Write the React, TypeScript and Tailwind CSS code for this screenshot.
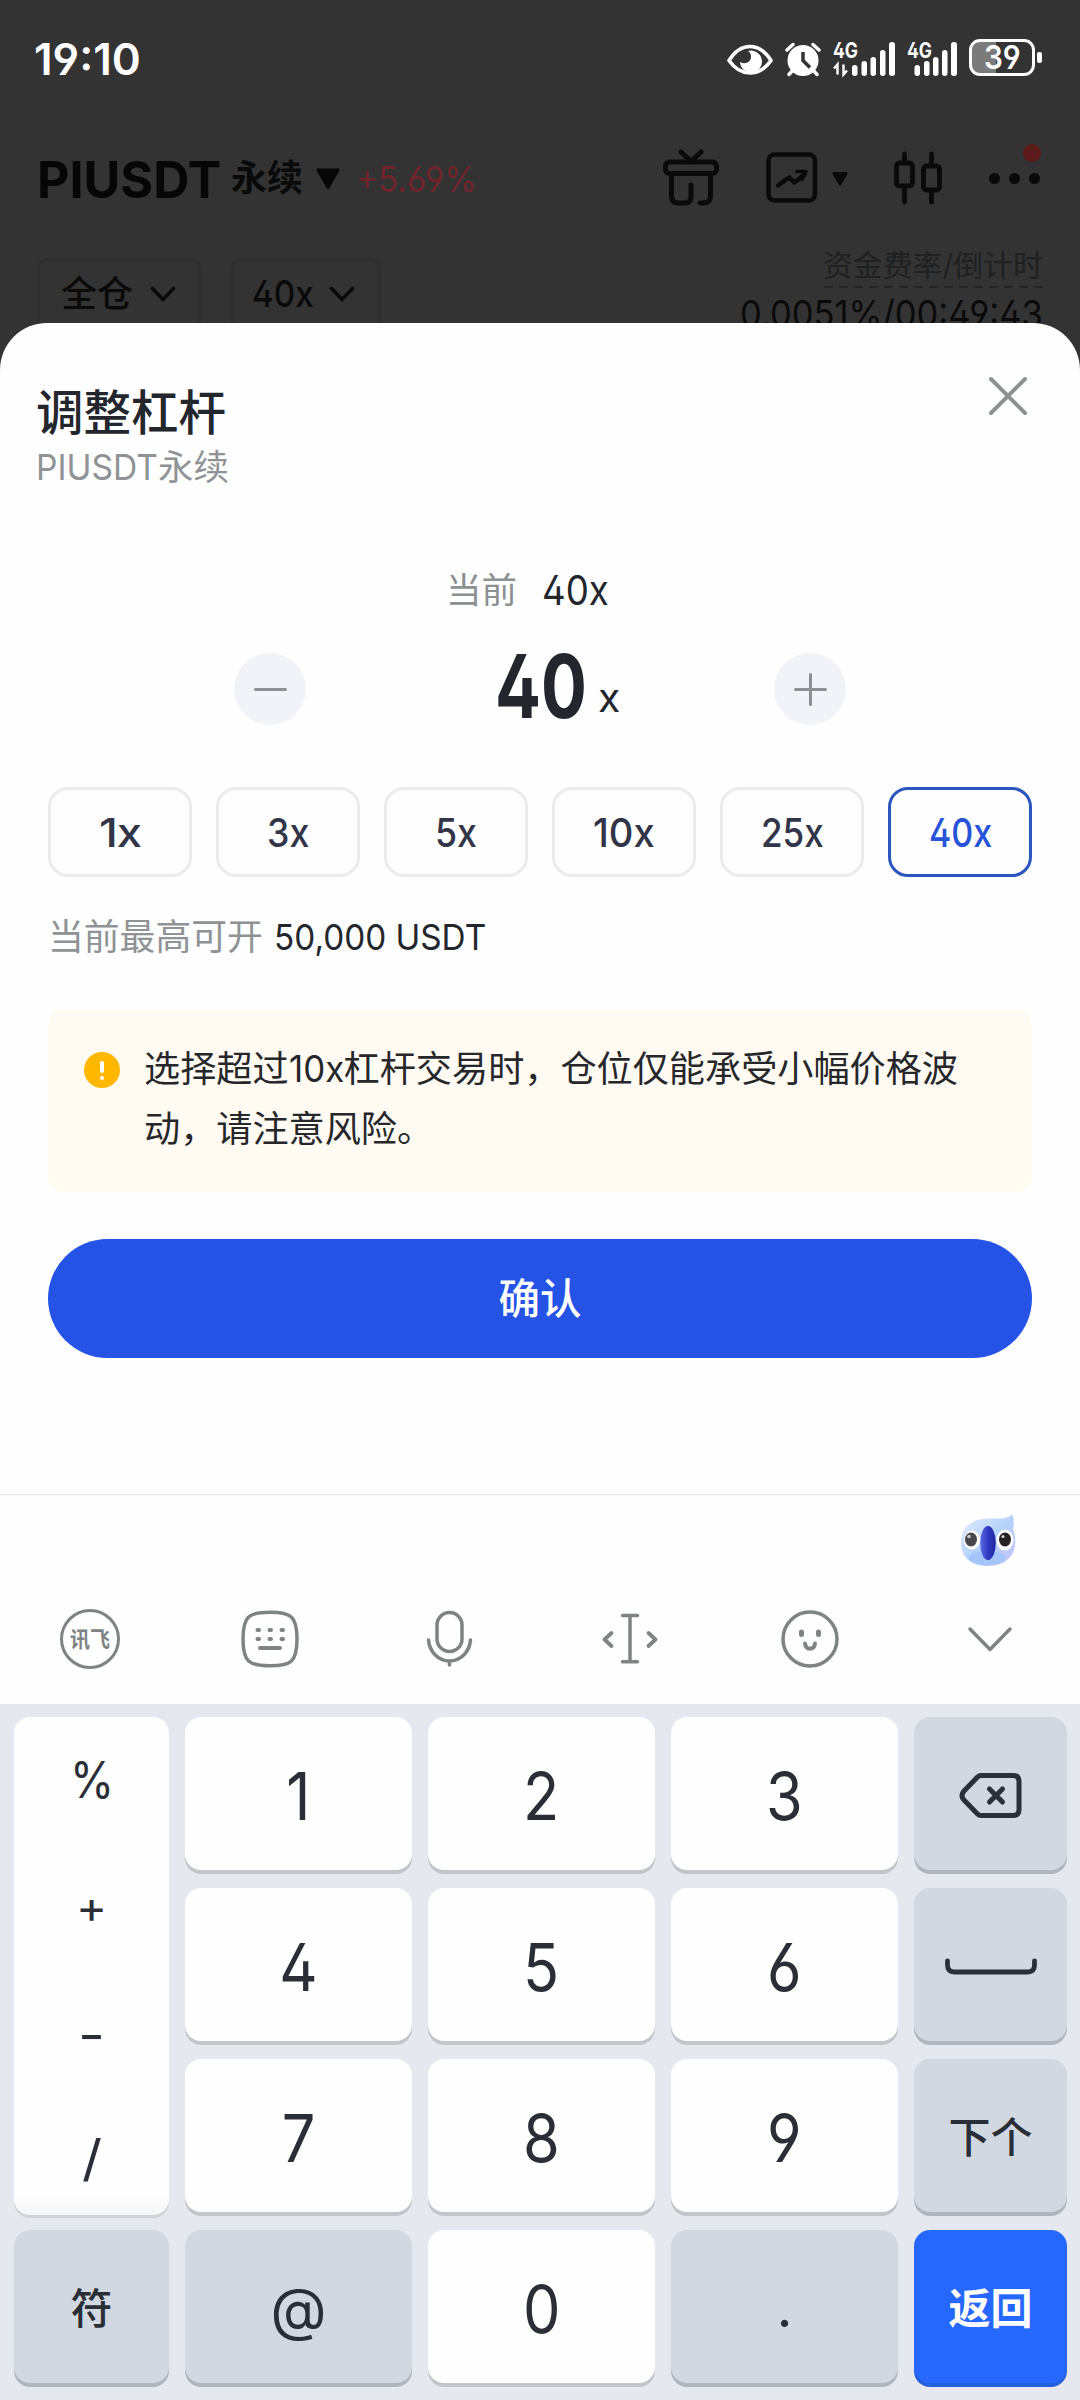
import { useLayoutEffect, useRef, useState } from "react";
import type { ReactNode } from "react";

/** Single line of text condensed or widened to an exact width. */
function Fit({ w, className = "", children }: { w: number; className?: string; children: ReactNode }) {
  const ref = useRef<HTMLSpanElement>(null);
  const [scale, setScale] = useState(1);
  useLayoutEffect(() => {
    if (ref.current) setScale(w / ref.current.offsetWidth);
  }, [w]);
  return (
    <span className={`inline-block whitespace-nowrap ${className}`} style={{ width: w }}>
      <span ref={ref} className="inline-block origin-left" style={{ transform: `scaleX(${scale})` }}>
        {children}
      </span>
    </span>
  );
}

function StatusBar() {
  return (
    <div className="flex h-[118px] items-center justify-between pr-[38px] pl-[34px] text-white">
      <Fit w={107} className="text-[44px] leading-[60px] font-semibold">19:10</Fit>
      <div className="flex items-center gap-3">
        <svg className="h-[36px] w-[46px]" viewBox="727 40 46 36" fill="none">
          <path d="M729 59.500C735 50 742 45.500 750 45.500S765 50 771 59.500C765 68 758 72 750 72S735 68 729 59.500Z" stroke="#fff" strokeWidth="3.600" strokeLinejoin="round" />
          <path d="M748 50a11 11 0 1 1-8 11c5 3 11 0 11-5 0-3-1-5-3-6Z" fill="#fff" />
        </svg>
        <svg className="h-[36px] w-[36px]" viewBox="785 40 36 36" fill="none">
          <circle cx="803" cy="59.500" r="15.500" fill="#fff" />
          <path d="M787 49l6-5.500M819 49l-6-5.500M793 69l-4 4.500M813 69l4 4.500" stroke="#fff" strokeWidth="3.500" strokeLinecap="round" />
          <path d="M803 51v8.500l7 7" stroke="#333" strokeWidth="3.500" />
        </svg>
        <svg className="h-[46px] w-[62px] overflow-visible" viewBox="833 35 62 46" fill="#fff">
          <text x="833" y="57" fontSize="21" fontWeight="700" textLength="25" lengthAdjust="spacingAndGlyphs">4G</text>
          <path d="M834 67.500l3.500-4v10M847 69.500l-3.500 4v-10" fill="none" stroke="#fff" strokeWidth="2.400" />
          <rect x="852" y="64" width="5.500" height="11" rx="2.700" />
          <rect x="861.500" y="60" width="5.500" height="15" rx="2.700" />
          <rect x="870.500" y="56" width="5.500" height="19" rx="2.700" />
          <rect x="880" y="49" width="5.500" height="26" rx="2.700" />
          <rect x="889" y="41" width="6" height="34" rx="2.700" />
        </svg>
        <svg className="h-[46px] w-[50px] overflow-visible" viewBox="907 35 50 46" fill="#fff">
          <text x="907" y="57" fontSize="21" fontWeight="700" textLength="25" lengthAdjust="spacingAndGlyphs">4G</text>
          <rect x="914.500" y="64" width="5.500" height="11" rx="2.700" />
          <rect x="924" y="60" width="5.500" height="15" rx="2.700" />
          <rect x="933" y="56" width="5.500" height="19" rx="2.700" />
          <rect x="942" y="49" width="5.500" height="26" rx="2.700" />
          <rect x="951" y="41" width="6" height="34" rx="2.700" />
        </svg>
        <div className="mb-[3px] flex items-center gap-[2px]">
          <div className="flex h-[37px] w-[66px] items-center justify-center rounded-[11px] border-[3px] border-white bg-[linear-gradient(90deg,#7b7b7b_40%,#333_40%)]">
            <Fit w={37} className="text-[32px] leading-[32px] font-semibold">39</Fit>
          </div>
          <div className="h-[11px] w-[5px] rounded-[2px] bg-white" />
        </div>
      </div>
    </div>
  );
}

function SmallChevron() {
  return (
    <svg className="h-[16px] w-[26px]" viewBox="0 0 26 16" fill="none">
      <path d="M2.500 2.500L13 13.500 23.500 2.500" stroke="#0a0a0a" strokeWidth="3.600" strokeLinecap="round" />
    </svg>
  );
}

function TradeHeader() {
  return (
    <div className="text-[#0a0a0a]">
      <div className="flex h-[122px] items-center pr-[40px] pl-[37px]">
        <Fit w={184} className="pt-[2px] text-[51px] leading-[60px] font-bold text-[#060606]">PIUSDT</Fit>
        <span className="mb-[3px] ml-[10px] text-[36px] leading-[50px] font-bold">永续</span>
        <svg className="ml-[12px] h-[22px] w-[26px]" viewBox="0 0 26 22">
          <path d="M3 2h20L13 19.500Z" fill="#060606" stroke="#060606" strokeWidth="3" strokeLinejoin="round" />
        </svg>
        <Fit w={121} className="ml-[15px] text-[36px] leading-[50px] text-[#6f252c]">+5.69%</Fit>
        <div className="mb-[2px] ml-auto flex items-center">
          <svg className="h-[58px] w-[56px]" viewBox="663 149 56 58" fill="none" stroke="#0a0a0a" strokeWidth="5" strokeLinecap="round" strokeLinejoin="round">
            <rect x="665.500" y="162" width="51" height="11.500" rx="4" />
            <path d="M681 152l10 9.500 10-9.500M671.500 174v22q0 7 7 7h6q6.500 0 6.500-6v-12M710.500 174v22q0 7-7 7h-3.500" />
          </svg>
          <svg className="ml-[47px] h-[52px] w-[52px]" viewBox="766 152 52 52" fill="none" stroke="#0a0a0a" strokeWidth="4.500" strokeLinecap="round" strokeLinejoin="round">
            <rect x="768.500" y="154.500" width="46.500" height="46" rx="6" />
            <path d="M778 185.500l11-8 5.500 5 10-8" />
            <path d="M797 171.500h9l-4 8" strokeWidth="3.500" />
          </svg>
          <svg className="mt-[2px] ml-[14px] h-[16px] w-[16px]" viewBox="0 0 16 16">
            <path d="M2 2.500h12L8 13Z" fill="#0a0a0a" stroke="#0a0a0a" strokeWidth="3" strokeLinejoin="round" />
          </svg>
          <svg className="ml-[46px] h-[54px] w-[48px]" viewBox="894 150 48 54" fill="none" stroke="#0a0a0a" strokeWidth="4.800" strokeLinecap="round">
            <rect x="896.500" y="162" width="16" height="23" rx="3" />
            <rect x="923.500" y="165" width="16" height="24" rx="3" />
            <path d="M904.500 153v8M904.500 186v15M931.500 153v11M931.500 190v11" />
          </svg>
          <div className="relative ml-[47px] flex gap-[9px]">
            <span className="size-[11px] rounded-full bg-[#0a0a0a]" />
            <span className="size-[11px] rounded-full bg-[#0a0a0a]" />
            <span className="size-[11px] rounded-full bg-[#0a0a0a]" />
            <span className="absolute -top-[29px] -right-[1px] size-[18px] rounded-full bg-[#5c1a1a]" />
          </div>
        </div>
      </div>
      <div className="flex items-start justify-between pr-[37px] pl-[37px]">
        <div className="mt-[18px] flex gap-[28px]">
          <div className="flex h-[72px] w-[165px] items-center gap-[17px] rounded-[10px] border-[3px] border-[#2f2f2f] pl-[21px]">
            <span className="text-[36px] leading-[40px] font-medium">全仓</span>
            <SmallChevron />
          </div>
          <div className="flex h-[72px] w-[151px] items-center gap-[15px] rounded-[10px] border-[3px] border-[#2f2f2f] pl-[19px]">
            <Fit w={62} className="text-[37px] leading-[40px] font-medium">40x</Fit>
            <SmallChevron />
          </div>
        </div>
        <div className="mt-[4px] flex flex-col items-end">
          <Fit w={220} className="h-[42px] text-[30px] leading-[42px] text-[#1f2021]">资金费率/倒计时</Fit>
          <div className="h-[2px] w-[219px] bg-[repeating-linear-gradient(90deg,#232525_0_9px,transparent_9px_15px)]" />
          <Fit w={303} className="mt-px h-[50px] text-[37px] leading-[50px]">0.0051%/00:49:43</Fit>
        </div>
      </div>
    </div>
  );
}

const presets = [
  { label: "1x", w: 42 },
  { label: "3x", w: 42 },
  { label: "5x", w: 42 },
  { label: "10x", w: 62 },
  { label: "25x", w: 63 },
  { label: "40x", w: 63 },
];

function LeverageSheet() {
  return (
    <div className="h-[1171px] rounded-t-[47px] bg-[#fefefe] text-[#23262c]">
      <div className="flex h-[180px] justify-between pr-[51px] pl-[36px]">
        <div className="pt-[60px]">
          <div className="text-[47.500px] leading-[60px] font-medium">调整杠杆</div>
          <div className="flex h-[50px] items-center text-[35.500px] leading-[50px] text-[#8f9395]">
            <Fit w={122}>PIUSDT</Fit>
            <span>永续</span>
          </div>
        </div>
        <svg className="mt-[52px] h-[42px] w-[42px]" viewBox="0 0 42 42">
          <path d="M4 4l34 34M38 4L4 38" stroke="#8c9192" strokeWidth="4" strokeLinecap="round" />
        </svg>
      </div>
      <div className="mt-[62px] flex h-[50px] items-center pl-[446px] text-[35.500px]">
        <span className="pt-[2px] leading-[50px] text-[#8b9092]">当前</span>
        <Fit w={67} className="ml-[25px] text-[41px] leading-[50px]">40x</Fit>
      </div>
      <div className="mt-[25px] flex h-[98px] items-center justify-between px-[234px]">
        <div className="flex size-[72px] items-center justify-center rounded-full bg-[#f2f3f8]">
          <div className="h-[3px] w-[33px] rounded bg-[#8c9095]" />
        </div>
        <div className="flex items-end pb-[6px] pl-[35px]">
          <Fit w={92} className="text-[88px] leading-[98px] font-bold">40</Fit>
          <Fit w={22} className="mb-[12px] ml-[11px] text-[39px] leading-[50px]">x</Fit>
        </div>
        <div className="flex size-[72px] items-center justify-center rounded-full bg-[#f2f3f8]">
          <svg className="size-[33px]" viewBox="0 0 33 33">
            <path d="M1.500 16.500h30M16.500 1.500v30" stroke="#8c9095" strokeWidth="3" strokeLinecap="round" />
          </svg>
        </div>
      </div>
      <div className="mx-12 mt-[49px] grid grid-cols-6 gap-6">
        {presets.map((p) => (
          <div
            key={p.label}
            className={
              p.label === "40x"
                ? "flex h-[90px] items-center justify-center rounded-[20px] border-[3px] border-[#2c55bd] pt-[2px] text-[#2653d8]"
                : "flex h-[90px] items-center justify-center rounded-[20px] border-[3px] border-[#ebeced] pt-[2px] text-[#323548]"
            }
          >
            {p.label === "1x" ? (
              <span className="text-[40px] leading-[50px] font-medium tracking-[-1px]">
                <Fit w={p.w}>1x</Fit>
              </span>
            ) : (
              <Fit w={p.w} className="text-[40px] leading-[50px] font-medium">{p.label}</Fit>
            )}
          </div>
        ))}
      </div>
      <div className="mt-[34px] flex h-[50px] items-center pl-[48px] text-[35.800px] leading-[50px]">
        <span className="pt-[1px] text-[#8f9395]">当前最高可开</span>
        <Fit w={212} className="mt-[2px] ml-[11px]">50,000 USDT</Fit>
      </div>
      <div className="mx-12 mt-[48px] flex h-[183px] rounded-[16px] bg-[#fffbf3] pt-[30px] pl-[36px]">
        <div className="mt-[13px] flex size-[36px] flex-col items-center justify-center gap-[3px] rounded-full bg-[#ffb700]">
          <span className="h-[12px] w-[4px] rounded-full bg-white" />
          <span className="size-[4px] rounded-full bg-white" />
        </div>
        <div className="ml-[24px] text-[36.150px] leading-[60px] whitespace-nowrap text-[#26272a]">
          <div>选择超过<Fit w={55}>10x</Fit>杠杆交易时，仓位仅能承受小幅价格波</div>
          <div>动，请注意风险。</div>
        </div>
      </div>
      <div className="mx-12 mt-[47px] flex h-[119px] items-center justify-center rounded-full bg-[#2453e6] pt-[2px] text-[41.500px] font-medium text-white">
        确认
      </div>
    </div>
  );
}

function Mascot() {
  return (
    <svg className="h-[54px] w-[58px]" viewBox="959 1514 58 54">
      <defs>
        <linearGradient id="face" x1="0" y1="0" x2="1" y2="1">
          <stop offset="0" stopColor="#e6eefd" />
          <stop offset=".5" stopColor="#b4d2fa" />
          <stop offset="1" stopColor="#c3c2f8" />
        </linearGradient>
        <linearGradient id="beak" x1="0" y1="0" x2="1" y2="0">
          <stop offset="0" stopColor="#5b6be6" />
          <stop offset=".5" stopColor="#2f39c0" />
          <stop offset="1" stopColor="#1f249c" />
        </linearGradient>
      </defs>
      <path d="M960 1543c0-15 10-24 26-24.500 10 0 20 1 25-4 2 3 2.500 8 1 14 6 17 1 37-25 37.500-17 0-27-9-27-23Z" fill="url(#face)" />
      <ellipse cx="986" cy="1558" rx="18" ry="7" fill="#a3c5f9" />
      <ellipse cx="971" cy="1540" rx="8" ry="9.500" fill="#fff" />
      <ellipse cx="1004" cy="1540" rx="8.500" ry="10.500" fill="#fff" />
      <ellipse cx="970" cy="1539.500" rx="6" ry="7" fill="#48484c" />
      <ellipse cx="1004" cy="1539.500" rx="6" ry="7" fill="#262223" />
      <circle cx="968" cy="1536.500" r="1.800" fill="#c9c9cc" />
      <circle cx="1002" cy="1536.500" r="1.600" fill="#d8d0cc" />
      <ellipse cx="987" cy="1543" rx="7.800" ry="17" fill="url(#beak)" />
    </svg>
  );
}

function ImeToolbar() {
  return (
    <div className="h-[210px] border-t border-[#e3e5e6] bg-[#fefefe]">
      <div className="flex h-[86px] justify-end pt-[19px] pr-[62px]">
        <Mascot />
      </div>
      <div className="grid h-[116px] grid-cols-6 place-items-center">
        <div className="flex size-[60px] items-center justify-center rounded-full border-[3.500px] border-[#808384] text-[22px] leading-none font-bold text-[#808384]">
          <Fit w={40}>讯飞</Fit>
        </div>
        <svg className="size-[60px]" viewBox="0 0 60 60" fill="none" stroke="#808384" strokeWidth="3.500" strokeLinecap="round">
          <path d="M30 3.200c21 0 27 4 27 26.800S51 56.800 30 56.800 3 53 3 30 9 3.200 30 3.200Z" />
          <path d="M17.500 21h1.500M29.500 21h1.500M41.500 21h1.500M17.500 30h1.500M29.500 30h1.500M41.500 30h1.500M20 39h20" strokeWidth="4" />
        </svg>
        <svg className="size-[60px]" viewBox="0 0 60 60" fill="none" stroke="#808384" strokeWidth="3.500" strokeLinecap="round">
          <rect x="17" y="3.500" width="25" height="39" rx="12.500" />
          <path d="M8.500 31c1 12 10 21 21 21s20-9 21-21M29.500 52v4" />
        </svg>
        <svg className="size-[60px]" viewBox="0 0 60 60" fill="none" stroke="#808384" strokeWidth="3.500" strokeLinecap="round" strokeLinejoin="round">
          <path d="M22.500 6.500h15M22.500 52.800h15M30 6.500v46" />
          <path d="M11.500 24l-7 6.500 7 6.500M48.500 24l7 6.500-7 6.500" strokeWidth="3.800" />
        </svg>
        <svg className="size-[60px]" viewBox="0 0 60 60" fill="none" stroke="#808384" strokeWidth="3.500" strokeLinecap="round">
          <circle cx="30" cy="30" r="27" />
          <path d="M25 34.500c1 7 9 7 10 0" strokeWidth="4" />
          <path d="M21.500 23v2.500M38.500 23v2.500" strokeWidth="5" />
        </svg>
        <svg className="size-[60px]" viewBox="0 0 60 60" fill="none" stroke="#808384" strokeWidth="3.500" strokeLinecap="round" strokeLinejoin="round">
          <path d="M10 20l20 20.500L50 20" />
        </svg>
      </div>
    </div>
  );
}

const whiteKey =
  "flex h-[153px] items-center justify-center rounded-[16px] bg-[#fefefe] pt-[5px] text-[66px] leading-none shadow-[0_4px_0_#c2c5ca]";
const grayKey =
  "flex h-[153px] items-center justify-center rounded-[16px] bg-[#d1d8df] pt-[5px] text-[42px] leading-none font-medium shadow-[0_4px_0_#b0b6bd]";

function NumberKey({ n }: { n: string }) {
  return (
    <div className={whiteKey}>
      <span className="scale-x-[.9]">{n}</span>
    </div>
  );
}

function Keypad() {
  return (
    <div className="grid h-[696px] grid-cols-[155px_227px_227px_227px_153px] grid-rows-[153px_153px_153px_153px] gap-x-4 gap-y-[18px] bg-[#e5e9ef] pt-[13px] pl-[14px] text-[#2a2e37]">
      <div className="row-span-3 flex h-[498px] flex-col items-center rounded-[16px] bg-[linear-gradient(180deg,#fefefe_96%,#f4f5f6)] text-[50px] leading-[126px] shadow-[0_3px_0_#cfd2d6]">
        <Fit w={44} className="h-[126px]">%</Fit>
        <Fit w={31} className="h-[129px] pt-[1px] text-[44px]">+</Fit>
        <Fit w={27} className="h-[129px]">-</Fit>
        <Fit w={20} className="h-[114px] leading-[114px]">/</Fit>
      </div>
      <NumberKey n="1" />
      <NumberKey n="2" />
      <NumberKey n="3" />
      <div className={grayKey}>
        <svg className="h-[46px] w-[64px]" viewBox="0 0 64 46" fill="none" stroke="#2a303a" strokeWidth="5" strokeLinecap="round" strokeLinejoin="round">
          <path d="M22 2.500h32q6 0 6 6v28q0 6-6 6H22q-2 0-3.500-1.500L5 27q-4-4.500 0-9L18.500 4Q20 2.500 22 2.500Z" />
          <path d="M30.500 16l13 13M43.500 16L30.500 29" />
        </svg>
      </div>
      <NumberKey n="4" />
      <NumberKey n="5" />
      <NumberKey n="6" />
      <div className={grayKey}>
        <svg className="h-[20px] w-[94px]" viewBox="0 0 94 20" fill="none" stroke="#2a303a" strokeWidth="4.800" strokeLinecap="round">
          <path d="M3.500 4v4q0 7 7 7h73q7 0 7-7V4" />
        </svg>
      </div>
      <NumberKey n="7" />
      <NumberKey n="8" />
      <NumberKey n="9" />
      <div className={grayKey}>下个</div>
      <div className={grayKey}>符</div>
      <div className={grayKey}>
        <span className="text-[58px] font-normal">@</span>
      </div>
      <NumberKey n="0" />
      <div className={grayKey}>
        <span className="text-[50px]">.</span>
      </div>
      <div className="flex h-[153px] items-center justify-center rounded-[16px] bg-[#2668fe] pt-[5px] text-[42px] leading-none font-bold text-white shadow-[0_4px_0_#2560dc]">
        返回
      </div>
    </div>
  );
}

export default function App() {
  return (
    <div className="h-[2400px] w-[1080px] overflow-hidden bg-[#333] font-['Inter','Noto_Sans_CJK_SC',sans-serif] [font-feature-settings:'cv02','cv03','cv04']">
      <div className="h-[323px] overflow-hidden">
        <StatusBar />
        <TradeHeader />
      </div>
      <LeverageSheet />
      <ImeToolbar />
      <Keypad />
    </div>
  );
}
